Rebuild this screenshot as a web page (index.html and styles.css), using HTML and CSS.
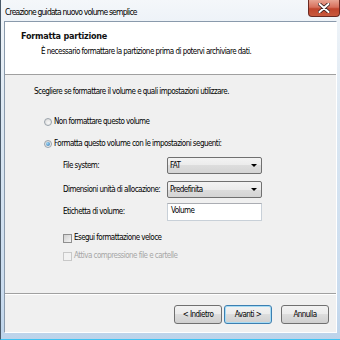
FILE: index.html
```html
<!DOCTYPE html>
<html lang="it">
<head>
<meta charset="utf-8">
<title>Creazione guidata nuovo volume semplice</title>
<link rel="stylesheet" href="styles.css">
</head>
<body>
<div class="window">
  <div class="titlebar">
    <span class="title">Creazione guidata nuovo volume semplice</span>
    <span class="close">
      <svg width="12" height="10" viewBox="0 0 12 10"><path d="M1.5 1 L10.5 9 M10.5 1 L1.5 9" stroke="#3a2020" stroke-width="3.6" stroke-linecap="round"/><path d="M1.5 1 L10.5 9 M10.5 1 L1.5 9" stroke="#ffffff" stroke-width="2" stroke-linecap="round"/></svg>
    </span>
  </div>
  <div class="client">
    <div class="header">
      <div class="h-title">Formatta partizione</div>
      <div class="h-sub">È necessario formattare la partizione prima di potervi archiviare dati.</div>
    </div>
    <div class="body">
      <div class="intro">Scegliere se formattare il volume e quali impostazioni utilizzare.</div>
      <div class="radio r1"><span class="rb"></span>Non formattare questo volume</div>
      <div class="radio r2"><span class="rb on"></span>Formatta questo volume con le impostazioni seguenti:</div>
      <div class="form">
        <div class="row row1"><span class="lbl">File system:</span><span class="combo">FAT<span class="arrow"></span></span></div>
        <div class="row row2"><span class="lbl">Dimensioni unità di allocazione:</span><span class="combo">Predefinita<span class="arrow"></span></span></div>
        <div class="row row3"><span class="lbl">Etichetta di volume:</span><span class="textbox">Volume</span></div>
      </div>
      <div class="check c1"><span class="cb"></span>Esegui formattazione veloce</div>
      <div class="check c2 disabled"><span class="cb"></span>Attiva compressione file e cartelle</div>
    </div>
    <div class="footer">
      <span class="btn">&lt; Indietro</span>
      <span class="btn default">Avanti &gt;</span>
      <span class="btn cancel">Annulla</span>
    </div>
  </div>
</div>
</body>
</html>
```
FILE: styles.css
```css
html, body {
  margin: 0;
  padding: 0;
}
body {
  width: 340px;
  height: 340px;
  overflow: hidden;
  font-family: "Liberation Sans Narrow", "DejaVu Sans Condensed", "Liberation Sans", sans-serif;
  font-stretch: condensed;
  font-size: 8px;
  letter-spacing: -0.55px;
  color: #000;
}
.window {
  width: 340px;
  height: 340px;
  box-sizing: border-box;
  display: flex;
  flex-direction: column;
  background: linear-gradient(to bottom, #f4f7fa 0px, #eef3f8 20px, #dbe7f2 120px, #c9dbee 300px, #bcd3ea 340px);
  border-left: 1px solid #4a5a6a;
  border-bottom: 1px solid #3ec3f3;
  padding: 0 3px 6px 3px;
}
.titlebar {
  height: 21px;
  flex: none;
  display: flex;
  justify-content: space-between;
  align-items: flex-start;
}
.title {
  font-size: 8.5px;
  letter-spacing: -0.8px;
  line-height: 12px;
  margin-top: 6px;
  margin-left: 1px;
  color: #000;
}
.close {
  width: 32px;
  height: 17px;
  box-sizing: border-box;
  margin-right: -3px;
  border: 1px solid #6b2a22;
  border-top: none;
  border-radius: 0 0 4px 4px;
  background: linear-gradient(to bottom, #e8a493 0%, #d7705c 45%, #c0452d 55%, #c85a3e 100%);
  display: flex;
  align-items: center;
  justify-content: center;
}
.client {
  flex: 1;
  display: flex;
  flex-direction: column;
  border: 1px solid #8a9aac;
  border-right-color: #ffffff;
  border-bottom-color: #ffffff;
  background: #f0f0f0;
}
.header {
  flex: none;
  background: #fff;
  border-bottom: 1px solid #a0a0a0;
  box-sizing: border-box;
  height: 53px;
}
.h-title {
  font-weight: bold;
  font-size: 9px;
  letter-spacing: -0.25px;
  line-height: 12px;
  margin: 8px 0 0 16px;
  color: #111;
}
.h-sub {
  line-height: 12px;
  margin: 4px 0 0 36px;
}
.body {
  flex: 1;
  padding-left: 29px;
  border-bottom: 1px solid #a0a0a0;
}
.intro {
  line-height: 12px;
  margin-top: 11px;
}
.radio {
  display: flex;
  align-items: center;
  line-height: 12px;
  margin-left: 10px;
}
.r1 { margin-top: 18px; }
.r2 { margin-top: 10px; }
.rb {
  width: 8px;
  height: 8px;
  box-sizing: border-box;
  border-radius: 50%;
  border: 1px solid #9aa3ab;
  background: radial-gradient(circle at 60% 65%, #f8f8f8, #d6d6d6);
  margin-right: 2px;
  display: flex;
  align-items: center;
  justify-content: center;
}
.rb.on::after {
  content: "";
  width: 4px;
  height: 4px;
  border-radius: 50%;
  background: radial-gradient(circle at 35% 35%, #9fd8f6, #2a6fb0);
}
.form {
  margin-top: 7px;
  margin-left: 29px;
}
.row {
  display: flex;
  align-items: center;
}
.row2 { margin-top: 7px; }
.row3 { margin-top: 5px; }
.lbl {
  width: 104px;
  line-height: 12px;
  white-space: nowrap;
}
.combo {
  width: 95px;
  height: 17px;
  box-sizing: border-box;
  border: 1px solid #707070;
  border-radius: 2px;
  background: linear-gradient(to bottom, #f3f3f3 0%, #ebebeb 50%, #dddddd 50%, #d4d4d4 100%);
  padding-left: 2px;
  display: flex;
  align-items: center;
  justify-content: space-between;
}
.arrow {
  width: 0;
  height: 0;
  border-left: 3px solid transparent;
  border-right: 3px solid transparent;
  border-top: 3px solid #000;
  margin-right: 4px;
}
.textbox {
  width: 95px;
  height: 18px;
  box-sizing: border-box;
  border: 1px solid #c8d0d8;
  border-top-color: #abadb3;
  background: #fff;
  padding: 1px 0 0 3px;
  line-height: 12px;
}
.check {
  display: flex;
  align-items: center;
  line-height: 12px;
  margin-left: 29px;
}
.c1 { margin-top: 11px; }
.c2 { margin-top: 6px; }
.cb {
  width: 9px;
  height: 9px;
  box-sizing: border-box;
  border: 1px solid #8f8f8f;
  background: linear-gradient(135deg, #d0d0d0, #f4f4f4);
  margin-right: 2px;
}
.disabled { color: #a6a6a6; }
.disabled .cb {
  border-color: #c8c8c8;
  background: #f2f2f2;
}
.footer {
  height: 38px;
  flex: none;
  border-top: 1px solid #fff;
  display: flex;
  justify-content: flex-end;
  align-items: flex-start;
  padding: 10px 7px 0 0;
  box-sizing: border-box;
}
.btn {
  width: 48px;
  height: 19px;
  box-sizing: border-box;
  border: 1px solid #707070;
  border-radius: 3px;
  background: linear-gradient(to bottom, #f2f2f2 0%, #ebebeb 50%, #dddddd 50%, #cfcfcf 100%);
  display: flex;
  align-items: center;
  justify-content: center;
  line-height: 12px;
  margin-left: 2px;
}
.btn.default {
  border-color: #3c7fb1;
  box-shadow: inset 0 0 0 1px #a6dbf4;
}
.btn.cancel { margin-left: 9px; }
```
